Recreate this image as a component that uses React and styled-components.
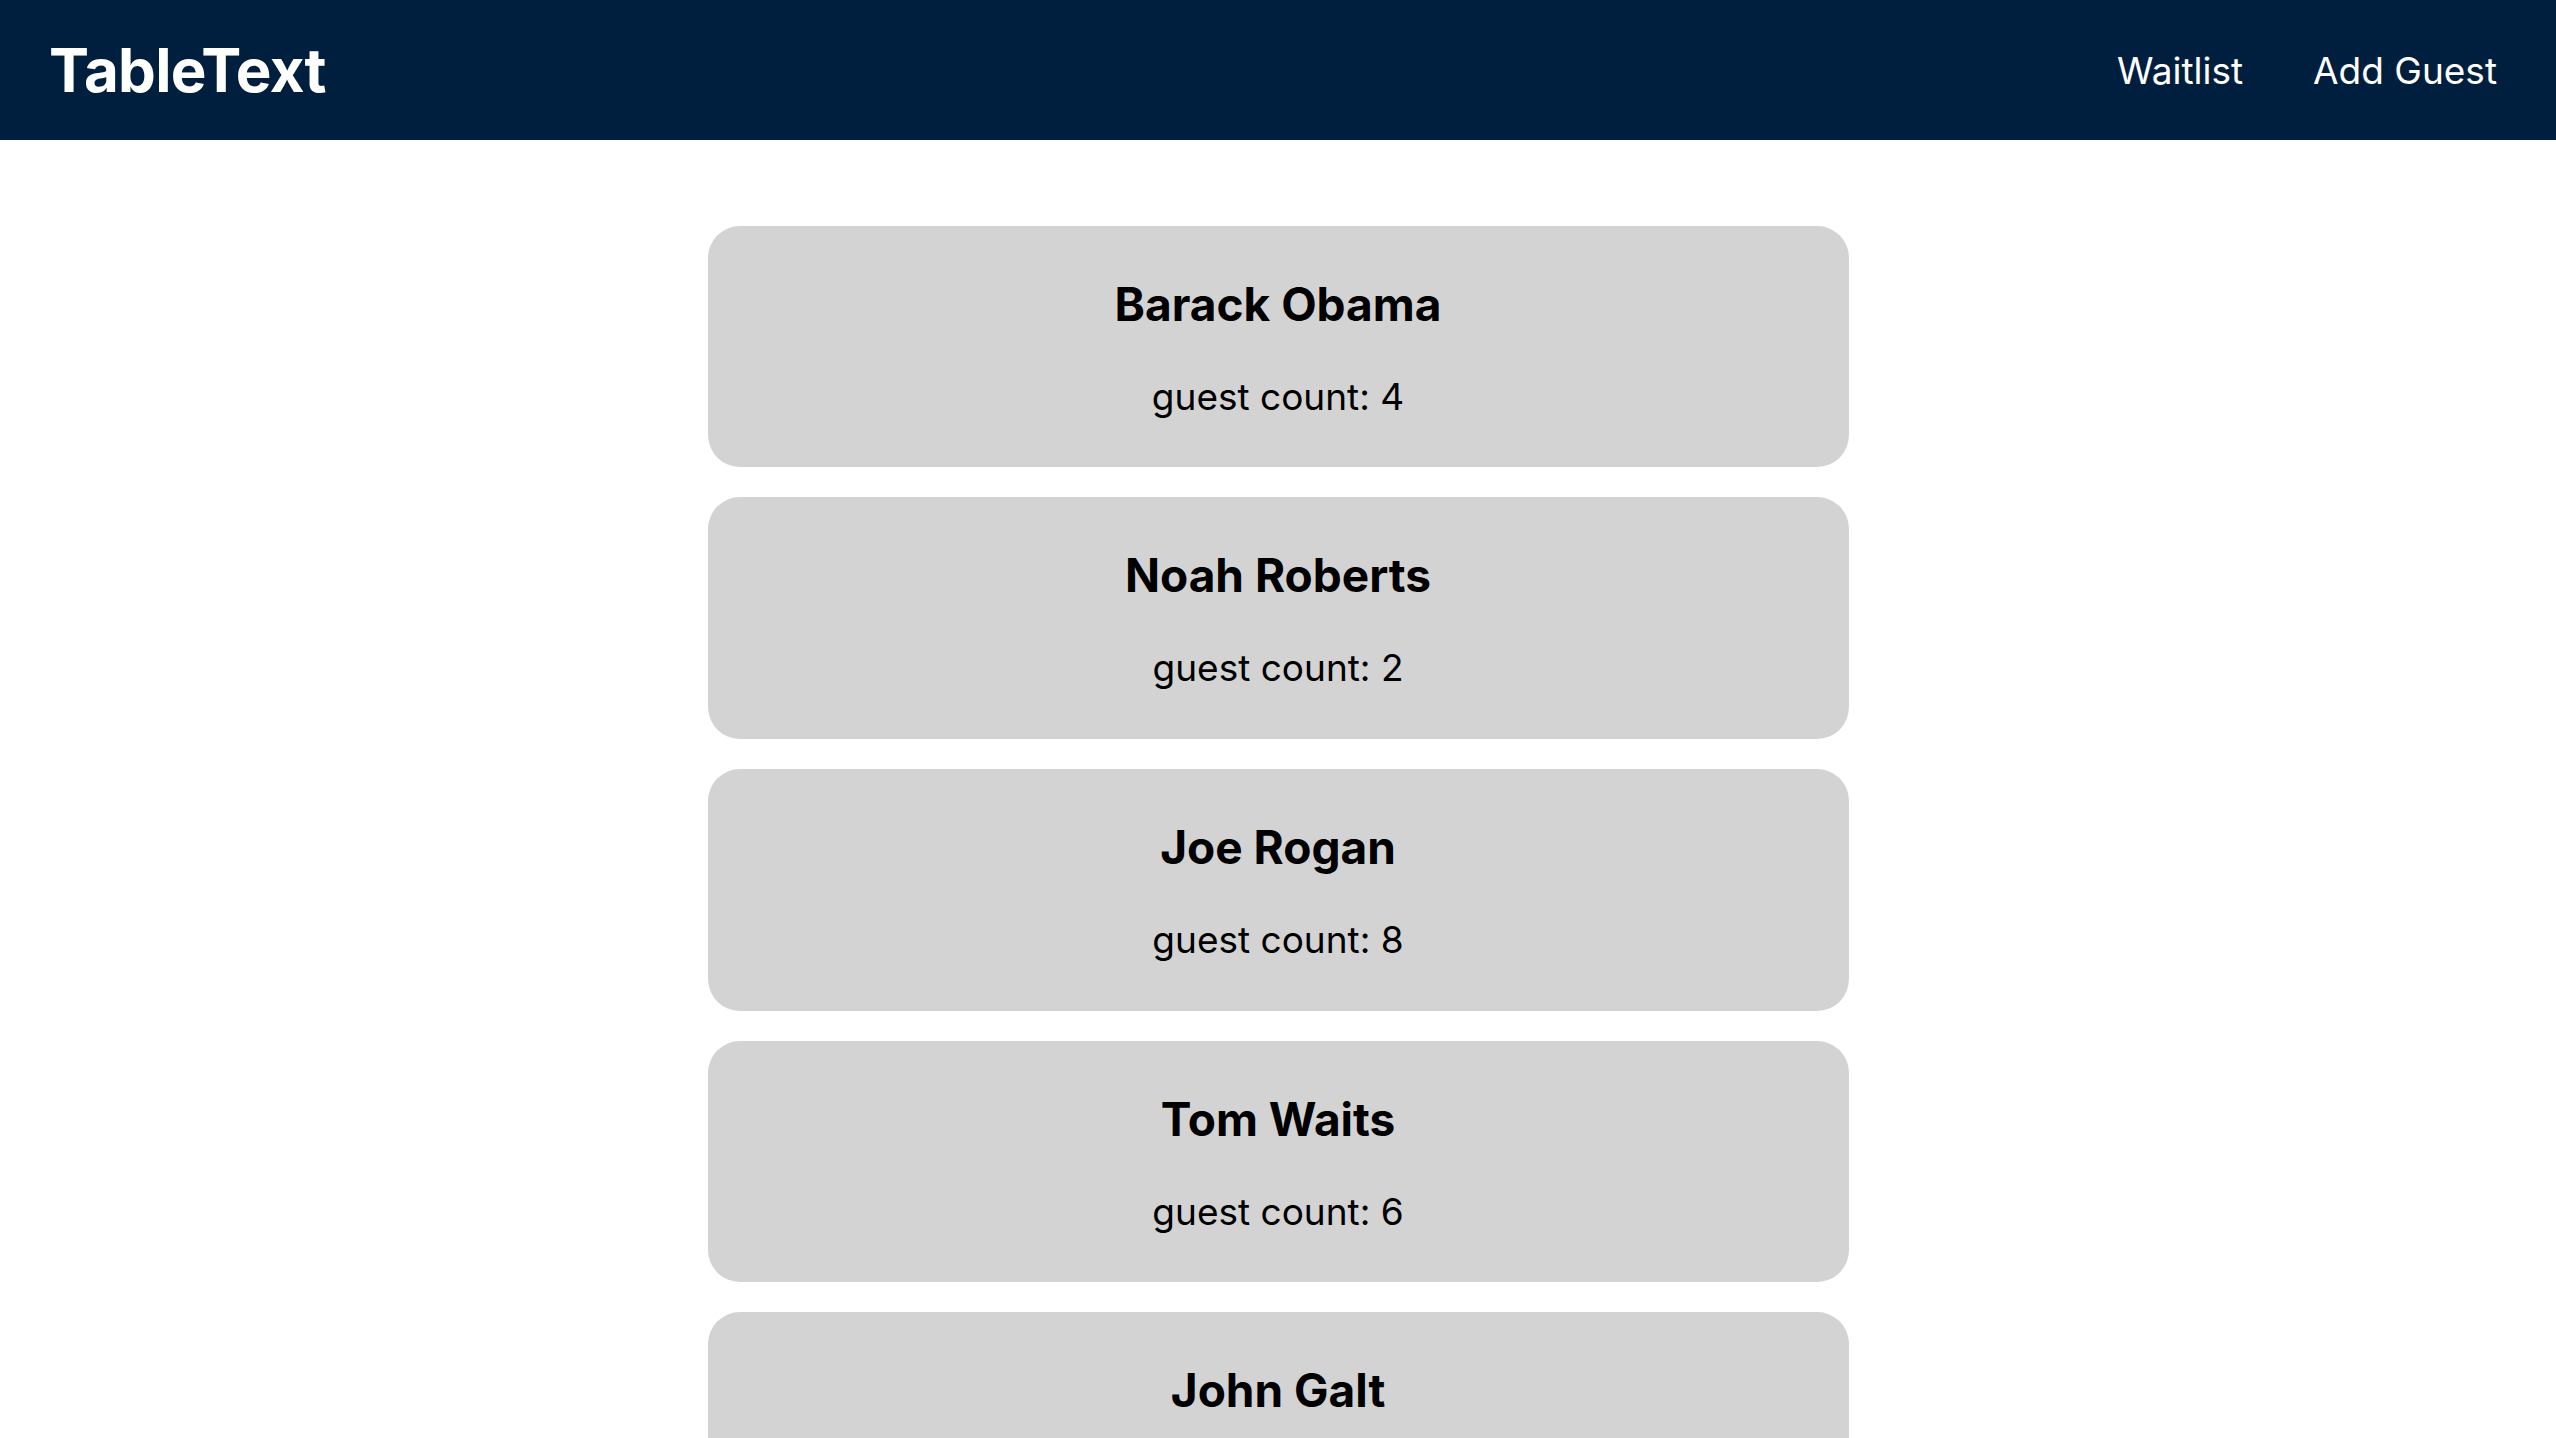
import React from 'react';
import styled, {createGlobalStyle} from 'styled-components';

const GlobalStyle = createGlobalStyle`
  html, body {
    margin: 0;
    padding: 0;
    background: #ffffff;
    font-family: Inter, "Noto Sans", sans-serif;
  }
`;

const Header = styled.header`
  height: 140px;
  background: #001f3f;
  display: flex;
  align-items: center;
  justify-content: space-between;
  padding: 0 59px 0 49px;
  box-sizing: border-box;
`;

const Logo = styled.h1`
  margin: 0;
  color: #ffffff;
  font-size: 60px;
  font-weight: 700;
  letter-spacing: -0.7px;
`;

const Nav = styled.nav`
  display: flex;
  gap: 70px;
`;

const NavLink = styled.a`
  color: #ffffff;
  font-size: 37px;
  text-decoration: none;
  cursor: pointer;
`;

const List = styled.main`
  display: flex;
  flex-direction: column;
  align-items: center;
  gap: 30px;
  padding-top: 85.7px;
`;

const Card = styled.div`
  width: 1141px;
  height: 241.7px;
  box-sizing: border-box;
  background: #d3d3d3;
  border-radius: 32px;
  display: flex;
  flex-direction: column;
  align-items: center;
  padding-top: 50px;
`;

const Name = styled.h2`
  margin: 0;
  font-size: 46px;
  font-weight: 700;
  color: #000;
`;

const Count = styled.p`
  margin: 42px 0 0;
  font-size: 37px;
  color: #000;
`;

const guests = [
  {name: 'Barack Obama', count: 4},
  {name: 'Noah Roberts', count: 2},
  {name: 'Joe Rogan', count: 8},
  {name: 'Tom Waits', count: 6},
  {name: 'John Galt', count: 3},
];

export default function App() {
  return (
    <>
      <GlobalStyle />
      <Header>
        <Logo>TableText</Logo>
        <Nav>
          <NavLink>Waitlist</NavLink>
          <NavLink>Add Guest</NavLink>
        </Nav>
      </Header>
      <List>
        {guests.map(g => (
          <Card key={g.name}>
            <Name>{g.name}</Name>
            <Count>guest count: {g.count}</Count>
          </Card>
        ))}
      </List>
    </>
  );
}
